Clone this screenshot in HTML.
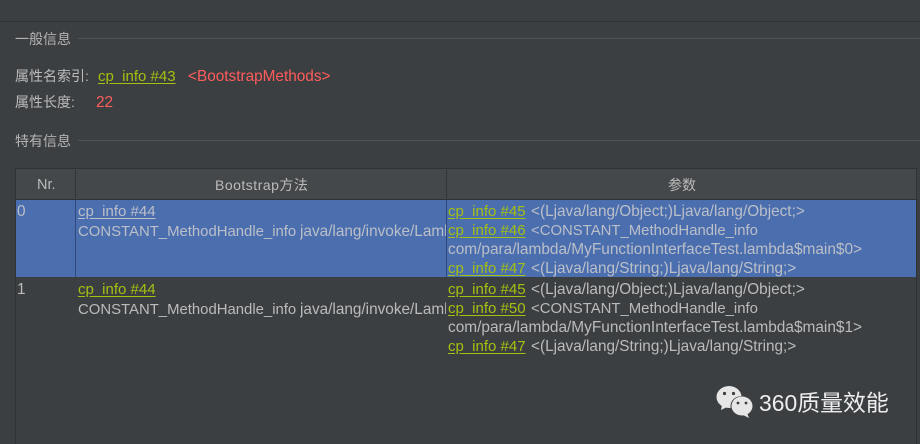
<!DOCTYPE html>
<html><head><meta charset="utf-8"><style>
html,body{margin:0;padding:0;background:#3c3f41}
#p{position:relative;width:920px;height:444px;overflow:hidden;background:#3c3f41;font-family:"Liberation Sans","Noto Sans CJK SC",sans-serif;font-size:14px;color:#bbbbbb}
.t{position:absolute;white-space:nowrap;line-height:20px;height:20px}
.r{position:absolute}
.g{color:#a4c010;text-decoration:underline;text-underline-offset:2px;font-size:15px}
.a{font-size:15.35px}
.l{font-size:15.42px}
.c{font-size:14.9px}
.sel{color:#bbbfc8}
</style></head><body><div id="p">
<div class="r" style="left:0;top:21px;width:920px;height:1px;background:#323232"></div>
<div class="t" style="left:15px;top:29px;color:#b4b4b4">一般信息</div>
<div class="r" style="left:78px;top:38px;width:842px;height:1px;background:#505254"></div>
<div class="t" style="left:15px;top:66px">属性名索引:</div>
<div class="t g" style="left:98px;top:67px">cp_info #43</div>
<div class="t a" style="left:188px;top:67px;color:#ff5c5c">&lt;BootstrapMethods&gt;</div>
<div class="t" style="left:15px;top:92px">属性长度:</div>
<div class="t a" style="left:96px;top:93px;color:#ff5c5c">22</div>
<div class="t" style="left:15px;top:131px;color:#b4b4b4">特有信息</div>
<div class="r" style="left:78px;top:140px;width:842px;height:1px;background:#505254"></div>

<div class="r" style="left:15px;top:168px;width:902px;height:276px;border-left:1px solid #2f3133;border-right:1px solid #2f3133;border-top:1px solid #2f3133;box-sizing:border-box"></div>
<div class="r" style="left:16px;top:169px;width:900px;height:30px;background:#45484a"></div>
<div class="r" style="left:16px;top:199px;width:900px;height:1px;background:#2f3133"></div>
<div class="r" style="left:75px;top:170px;width:1px;height:28px;background:#323436"></div>
<div class="r" style="left:446px;top:170px;width:1px;height:28px;background:#323436"></div>
<div class="t" style="left:37px;top:175px;font-size:14.5px">Nr.</div>
<div class="t" style="left:215px;top:175px;letter-spacing:.5px">Bootstrap方法</div>
<div class="t" style="left:668px;top:175px">参数</div>

<div class="r" style="left:16px;top:200px;width:900px;height:77px;background:#4b6eaf"></div>
<div class="r" style="left:75px;top:200px;width:1px;height:77px;background:#2f4a7a"></div>
<div class="r" style="left:446px;top:200px;width:1px;height:77px;background:#2f4a7a"></div>

<div class="t a sel" style="left:17px;top:202px">0</div>
<div class="t g sel" style="left:78px;top:202px;color:#bbbfc8">cp_info #44</div>
<div class="t c sel" style="left:78px;top:222px">CONSTANT_MethodHandle_info</div>
<div class="r" style="left:300px;top:222px;width:146px;height:20px;overflow:hidden"><div class="t a sel" style="left:0;top:0">java/lang/invoke/LambdaMeta</div></div>
<div class="t g" style="left:448px;top:202px">cp_info #45</div>
<div class="t a sel" style="left:531px;top:202px">&lt;(Ljava/lang/Object;)Ljava/lang/Object;&gt;</div>
<div class="t g" style="left:448px;top:221px">cp_info #46</div>
<div class="t c sel" style="left:531px;top:221px">&lt;CONSTANT_MethodHandle_info</div>
<div class="t l sel" style="left:448px;top:240px">com/para/lambda/MyFunctionInterfaceTest.lambda$main$0&gt;</div>
<div class="t g" style="left:448px;top:259px">cp_info #47</div>
<div class="t a sel" style="left:531px;top:259px">&lt;(Ljava/lang/String;)Ljava/lang/String;&gt;</div>

<div class="t a" style="left:17px;top:280px">1</div>
<div class="t g" style="left:78px;top:280px">cp_info #44</div>
<div class="t c" style="left:78px;top:300px">CONSTANT_MethodHandle_info</div>
<div class="r" style="left:300px;top:300px;width:146px;height:20px;overflow:hidden"><div class="t a" style="left:0;top:0">java/lang/invoke/LambdaMeta</div></div>
<div class="t g" style="left:448px;top:280px">cp_info #45</div>
<div class="t a" style="left:531px;top:280px">&lt;(Ljava/lang/Object;)Ljava/lang/Object;&gt;</div>
<div class="t g" style="left:448px;top:299px">cp_info #50</div>
<div class="t c" style="left:531px;top:299px">&lt;CONSTANT_MethodHandle_info</div>
<div class="t l" style="left:448px;top:318px">com/para/lambda/MyFunctionInterfaceTest.lambda$main$1&gt;</div>
<div class="t g" style="left:448px;top:337px">cp_info #47</div>
<div class="t a" style="left:531px;top:337px">&lt;(Ljava/lang/String;)Ljava/lang/String;&gt;</div>

<svg class="r" style="left:715px;top:384px" width="42" height="36" viewBox="0 0 42 36">
<ellipse cx="14" cy="13" rx="12.5" ry="11" fill="#e6e6e6"/>
<path d="M7 21l-1 5 6-3z" fill="#e6e6e6"/>
<ellipse cx="27" cy="22" rx="11.5" ry="10" fill="#3c3f41"/>
<ellipse cx="27" cy="22" rx="10.5" ry="9.5" fill="#e6e6e6"/>
<path d="M32 29l2 5-6-3z" fill="#e6e6e6"/>
<circle cx="9.5" cy="9.5" r="1.6" fill="#3c3f41"/><circle cx="18.5" cy="9.5" r="1.6" fill="#3c3f41"/>
<circle cx="23" cy="19" r="1.4" fill="#3c3f41"/><circle cx="31" cy="19" r="1.4" fill="#3c3f41"/>
</svg>
<div class="t" style="left:759px;top:388px;font-size:22.9px;line-height:30px;height:30px;color:#eeeeee">360质量效能</div>
</div></body></html>
